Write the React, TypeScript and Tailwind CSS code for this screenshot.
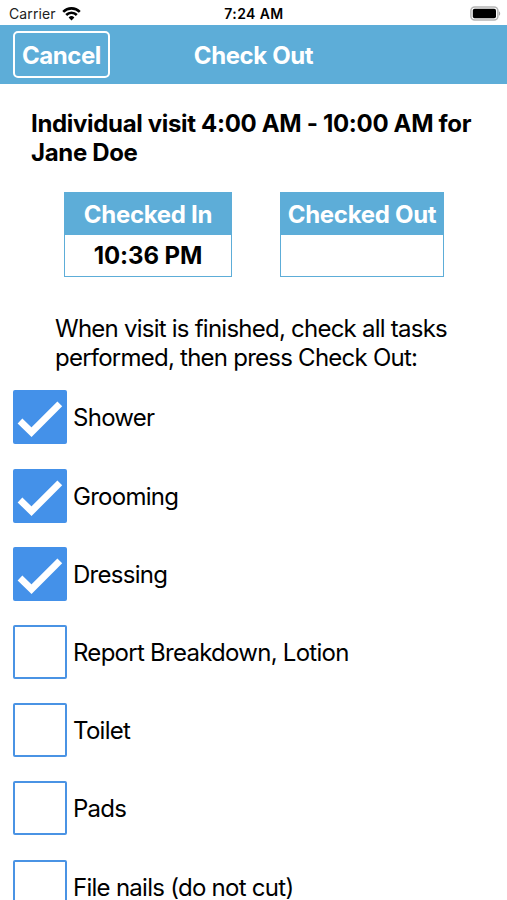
import React from 'react';

const tasks = [
  { label: 'Shower', done: true },
  { label: 'Grooming', done: true },
  { label: 'Dressing', done: true },
  { label: 'Report Breakdown, Lotion', done: false },
  { label: 'Toilet', done: false },
  { label: 'Pads', done: false },
  { label: 'File nails (do not cut)', done: false },
];

function WifiIcon() {
  return (
    <svg className="ml-[6px] h-[14px] w-[19px]" viewBox="0 0 19 14" fill="none" stroke="black" strokeWidth="2.6">
      <path d="M1.2 4.8a11.8 11.8 0 0 1 16.6 0" />
      <path d="M4.2 8a7.5 7.5 0 0 1 10.6 0" />
      <path d="M9.5 13.4 6.6 10.4a4.1 4.1 0 0 1 5.8 0Z" fill="black" stroke="none" />
    </svg>
  );
}

function BatteryIcon() {
  return (
    <svg className="h-[15px] w-[31px]" viewBox="0 0 31 15">
      <rect x="0.9" y="0.9" width="27" height="13.2" rx="3.8" fill="white" stroke="#b5b5b5" strokeWidth="1.5" />
      <rect x="2.8" y="2.8" width="23.2" height="9.4" rx="1.8" fill="black" />
      <path d="M29 5.2c1.6.7 1.6 3.9 0 4.6Z" fill="#a8a8a8" />
    </svg>
  );
}

function Checkbox({ checked }: { checked: boolean }) {
  if (!checked) {
    return <span className="h-[54px] w-[54px] shrink-0 rounded-[2px] border-[2px] border-[#4a93e4]" />;
  }
  return (
    <span className="h-[54px] w-[54px] shrink-0 rounded-[2px] bg-[#4491e9]">
      <svg className="h-full w-full" viewBox="0 0 54 54" fill="none" stroke="white" strokeWidth="6.8">
        <path d="M7 31 18.5 42.2 46.8 13.8" />
      </svg>
    </span>
  );
}

export default function App() {
  return (
    <div className="flex h-[900px] w-[507px] flex-col overflow-hidden bg-white font-['Inter',sans-serif] text-[24px] leading-[29px] text-black">
      <div className="grid h-[25px] shrink-0 grid-cols-3 items-center pt-[2px] pr-[6px] pl-[9px] text-[14px] leading-[17px]">
        <div className="flex items-center text-[#222]">
          <span className="tracking-[0.1px]">Carrier</span>
          <WifiIcon />
        </div>
        <span className="-ml-[2px] text-center font-semibold tracking-[0.4px]">7:24 AM</span>
        <div className="flex justify-end">
          <BatteryIcon />
        </div>
      </div>

      <header className="grid h-[59px] shrink-0 grid-cols-[1fr_auto_1fr] items-center bg-[#5dadd8] px-[13px] font-bold text-white">
        <button className="h-[47px] w-[97px] rounded-[5px] border-2 border-white pt-px tracking-[-0.45px]">Cancel</button>
        <h1 className="pt-px tracking-[-0.4px]">Check Out</h1>
      </header>

      <main className="flex flex-col">
        <h2 className="mt-[25px] ml-[31px] w-[460px] font-bold tracking-[-0.33px]">
          Individual visit 4:00 AM - 10:00 AM for
          <br />
          Jane Doe
        </h2>

        <div className="mt-[25px] ml-[64px] flex gap-[48px] text-center font-bold tracking-[-0.3px]">
          <div className="h-[85px] w-[168px] border border-[#5dadd8]">
            <div className="flex h-[42px] items-center justify-center bg-[#5dadd8] text-white">Checked In</div>
            <div className="flex h-[41px] items-center justify-center tracking-[-0.1px]">10:36 PM</div>
          </div>
          <div className="h-[85px] w-[164px] border border-[#5dadd8]">
            <div className="flex h-[42px] items-center justify-center bg-[#5dadd8] text-white">Checked Out</div>
          </div>
        </div>

        <p className="mt-[37px] ml-[55px] w-[440px] tracking-[-0.76px]">
          When visit is finished, check all tasks
          <br />
          performed, then press Check Out:
        </p>

        <ul className="mt-[18.4px] ml-[13px] flex flex-col gap-[24.2px] leading-[24px] tracking-[-0.73px]">
          {tasks.map((task) => (
            <li key={task.label} className="flex items-center gap-[6px]">
              <Checkbox checked={task.done} />
              <span className="pt-[2px]">{task.label}</span>
            </li>
          ))}
        </ul>
      </main>
    </div>
  );
}
